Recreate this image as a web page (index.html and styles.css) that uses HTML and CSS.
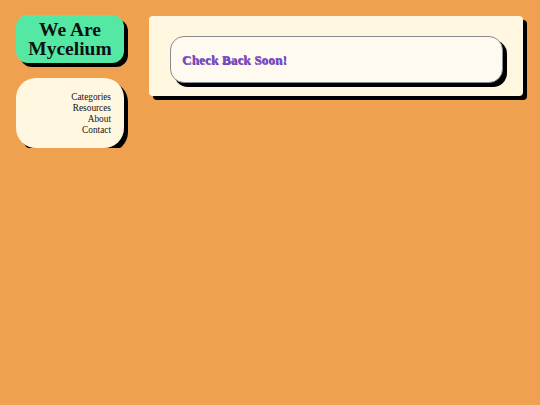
FILE: index.html
```html
<!DOCTYPE html>
<html>
<head>
<meta charset="utf-8">
<link rel="stylesheet" href="styles.css">
</head>
<body>
<div class="page">
  <aside class="sidebar">
    <div class="logo">We Are<br>Mycelium</div>
    <nav class="nav">
      <a href="#">Categories</a>
      <a href="#">Resources</a>
      <a href="#">About</a>
      <a href="#">Contact</a>
    </nav>
  </aside>
  <main class="main">
    <div class="card">
      <h2 class="notice">Check Back Soon!</h2>
    </div>
  </main>
</div>
</body>
</html>
```
FILE: styles.css
```css
html, body {
  margin: 0;
  padding: 0;
  background: #f0a150;
  font-family: "Liberation Serif", "Times New Roman", serif;
}
.page {
  display: flex;
  align-items: flex-start;
  gap: 25px;
  padding: 15px 0 0 16px;
}
.sidebar {
  width: 108px;
  display: flex;
  flex-direction: column;
  gap: 15px;
}
.logo {
  height: 48px;
  background: #55e8a5;
  border-radius: 12px;
  box-shadow: 4px 4px 0 #000;
  font-weight: bold;
  font-size: 19.5px;
  line-height: 19px;
  text-align: center;
  color: #111;
  display: flex;
  align-items: center;
  justify-content: center;
  box-sizing: border-box;
}
.nav {
  height: 70px;
  box-sizing: border-box;
  background: #fff7e0;
  border-radius: 20px;
  box-shadow: 4px 4px 0 #000;
  padding: 14px 13px 0 0;
  display: flex;
  flex-direction: column;
  align-items: flex-end;
}
.nav a {
  color: #111;
  text-decoration: none;
  font-size: 9.3px;
  line-height: 11px;
}
.main {
  width: 374px;
  height: 80px;
  box-sizing: border-box;
  margin-top: 1px;
  background: #fff7e0;
  border-radius: 4px;
  box-shadow: 4px 4px 0 #000;
  padding: 20px 20px 0 21px;
}
.card {
  height: 47px;
  box-sizing: border-box;
  background: #fffaf0;
  border: 1px solid #8a8a8a;
  border-radius: 14px;
  box-shadow: 4px 4px 0 #000;
  display: flex;
  align-items: center;
  padding: 0 0 0 11px;
}
.notice {
  margin: 0;
  font-size: 13.4px;
  font-weight: bold;
  color: #7a4cc4;
  text-shadow: 0.5px 0.5px 0 #6a40b0;
}
```
